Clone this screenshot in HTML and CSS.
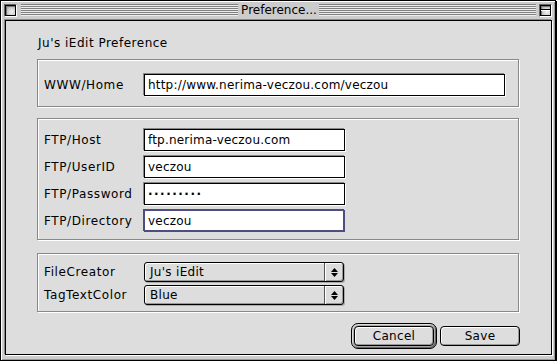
FILE: index.html
```html
<!DOCTYPE html>
<html>
<head>
<meta charset="utf-8">
<title>Preference...</title>
<link rel="stylesheet" href="styles.css">
</head>
<body>
<div class="window">
  <div class="titlebar">
    <div class="wbox close"><div class="wbox-in"></div></div>
    <div class="stripes"></div>
    <div class="title">Preference...</div>
    <div class="stripes right"></div>
    <div class="wbox collapse"><div class="wbox-in"><span class="bar"></span></div></div>
  </div>
  <div class="content">
    <div class="heading">Ju's iEdit Preference</div>
    <div class="group g1">
      <div class="row"><span class="label">WWW/Home</span><div class="field wide">http://www.nerima-veczou.com/veczou</div></div>
    </div>
    <div class="group g2">
      <div class="row"><span class="label">FTP/Host</span><div class="field narrow">ftp.nerima-veczou.com</div></div>
      <div class="row"><span class="label">FTP/UserID</span><div class="field narrow">veczou</div></div>
      <div class="row"><span class="label">FTP/Password</span><div class="field narrow pw">·········</div></div>
      <div class="row"><span class="label">FTP/Directory</span><div class="field narrow focus">veczou</div></div>
    </div>
    <div class="group g3">
      <div class="row"><span class="label">FileCreator</span>
        <div class="popup"><span class="val">Ju's iEdit</span><span class="arrows"><svg width="7" height="9" viewBox="0 0 7 9"><polygon points="3.5,0 7,4 0,4" fill="#000"/><polygon points="0,5 7,5 3.5,9" fill="#000"/></svg></span></div>
      </div>
      <div class="row"><span class="label">TagTextColor</span>
        <div class="popup"><span class="val">Blue</span><span class="arrows"><svg width="7" height="9" viewBox="0 0 7 9"><polygon points="3.5,0 7,4 0,4" fill="#000"/><polygon points="0,5 7,5 3.5,9" fill="#000"/></svg></span></div>
      </div>
    </div>
    <div class="buttons">
      <div class="ring"><div class="btn">Cancel</div></div>
      <div class="btn">Save</div>
    </div>
  </div>
</div>
</body>
</html>
```

FILE: styles.css
```css
* { box-sizing: border-box; }

body {
  margin: 0;
  background: #fff;
  font-family: "DejaVu Sans", "Liberation Sans", sans-serif;
  font-size: 12px;
  color: #000;
}

.window {
  width: 556px;
  height: 361px;
  border: 1px solid #000;
  box-shadow: 1px 1px 0 #000, inset 1px 1px 0 #fff, inset -1px -1px 0 #999;
  background: #ccc;
  display: flex;
  flex-direction: column;
}

.titlebar {
  height: 19px;
  flex: none;
  display: flex;
  align-items: flex-start;
  padding: 3px 3px 0 3px;
}

.wbox {
  width: 13px;
  height: 13px;
  flex: none;
  border: 1px solid;
  border-color: #666 #fff #fff #666;
}

.wbox-in {
  width: 11px;
  height: 11px;
  border: 1px solid #000;
  background: radial-gradient(circle at 65% 65%, #f2f2f2 0, #d0d0d0 45%, #8a8a8a 100%);
  box-shadow: inset 1px 1px 0 #777;
  position: relative;
}

.close { margin-right: 4px; }
.collapse { margin-left: 3px; }

.collapse .bar {
  position: absolute;
  left: 0;
  right: 0;
  top: 3px;
  height: 2px;
  border-top: 1px solid #000;
  border-bottom: 1px solid #fff;
}

.stripes {
  flex: 1;
  height: 12px;
  background: repeating-linear-gradient(to bottom, #808080 0, #808080 1px, #eeeeee 1px, #eeeeee 2px);
}

.title {
  flex: none;
  line-height: 14px;
  margin-top: -1px;
  padding: 0 2px 0 3px;
  white-space: nowrap;
}

.content {
  flex: 1;
  margin: 0 3px 5px 4px;
  border: 1px solid #000;
  background: #ddd;
  box-shadow: -1px -1px 0 #888, 1px 1px 0 #fff;
  padding: 15px 32px 0 31px;
  display: flex;
  flex-direction: column;
}

.heading {
  line-height: 14px;
  height: 14px;
  margin: 0 0 9px 1px;
  white-space: nowrap;
  letter-spacing: 0.5px;
}

.group {
  border: 1px solid #888;
  box-shadow: inset 1px 1px 0 #fff, 1px 1px 0 #fff;
  display: flex;
  flex-direction: column;
}

.g1 { padding: 14px 13px 10px 6px; margin-bottom: 11px; }
.g2 { padding: 10px 0 7px 6px; gap: 5px; margin-bottom: 13px; }
.g3 { padding: 8px 0 6px 6px; gap: 3px; margin-bottom: 11px; }

.row {
  display: flex;
  align-items: center;
}

.label {
  width: 100px;
  flex: none;
  line-height: 14px;
  white-space: nowrap;
  letter-spacing: 0.6px;
}

.field {
  height: 22px;
  border: 1px solid #000;
  background: #fff;
  box-shadow: -1px -1px 0 #888, 1px 1px 0 #fff;
  padding: 0 3px;
  line-height: 20px;
  white-space: nowrap;
  overflow: hidden;
  letter-spacing: 0.2px;
}

.wide { flex: 1; }
.narrow { width: 201px; flex: none; }

.pw { letter-spacing: 1.5px; font-weight: bold; }

.focus {
  border-color: #4e4e7e;
  box-shadow: -1px -1px 0 #4e4e7e, inset -1px -1px 0 #4e4e7e;
}

.popup {
  width: 200px;
  height: 20px;
  flex: none;
  border: 1px solid #000;
  border-radius: 3px;
  background: #ddd;
  box-shadow: inset 1px 1px 0 #fff, inset -1px -1px 0 #999, 1px 1px 0 #aaa;
  display: flex;
}

.popup .val {
  flex: 1;
  padding-left: 5px;
  line-height: 18px;
  white-space: nowrap;
  letter-spacing: 0.3px;
}

.popup .arrows {
  width: 19px;
  flex: none;
  border-left: 1px solid #555;
  box-shadow: inset 1px 0 0 #fff;
  display: flex;
  align-items: center;
  justify-content: center;
}

.popup .arrows svg { display: block; }

.buttons {
  display: flex;
  justify-content: flex-end;
  align-items: center;
  gap: 3px;
  margin-right: -1px;
}

.ring {
  border: 1px solid #000;
  border-radius: 7px;
  padding: 2px;
  background: #a8a8a8;
  box-shadow: inset 1px 1px 0 #ddd, inset -1px -1px 0 #666;
}

.btn {
  width: 80px;
  height: 20px;
  border: 1px solid #000;
  border-radius: 4px;
  background: #ddd;
  box-shadow: inset 1px 1px 0 #fff, inset -1px -1px 0 #999;
  text-align: center;
  line-height: 18px;
  letter-spacing: 0.3px;
}
```
